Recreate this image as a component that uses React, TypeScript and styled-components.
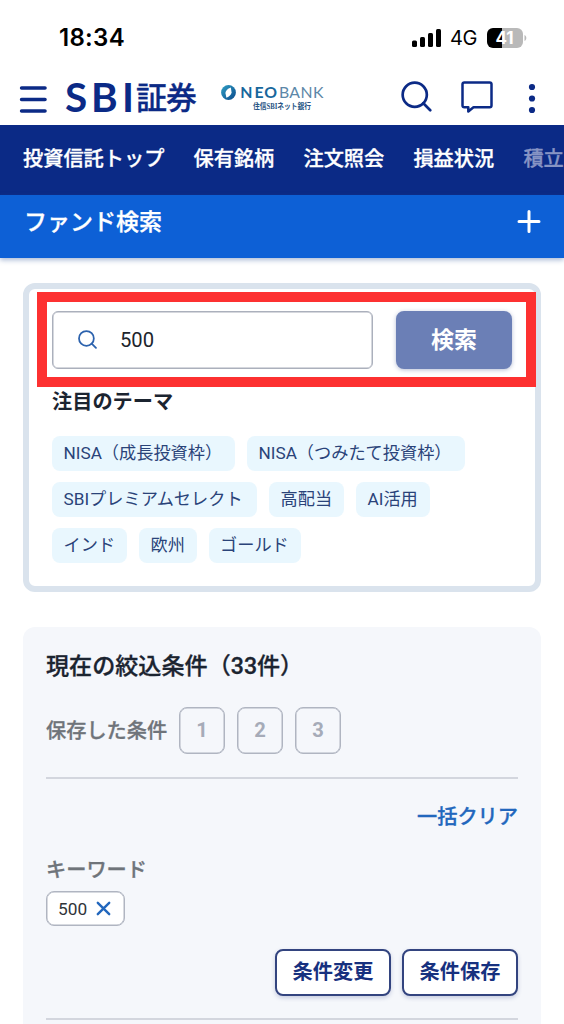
import React from 'react';
import styled, { createGlobalStyle, css } from 'styled-components';

const NAVY = '#0b2a86';

const semibold = css`
  font-weight: 500;
  -webkit-text-stroke: 0.3px currentColor;
`;

const GlobalStyle = createGlobalStyle`
  *, *::before, *::after { box-sizing: border-box; }
  html, body { margin: 0; padding: 0; }
  body {
    background: #fff;
    height: 1024px;
    overflow: hidden;
    font-family: Roboto, 'Noto Sans CJK JP', sans-serif;
    color: #1b2430;
  }
  button, input { font: inherit; margin: 0; }
  h1, h2, h3, p { margin: 0; font-weight: 700; }
`;

const Screen = styled.div`
  width: 564px;
  height: 1024px;
  overflow: hidden;
  display: flex;
  flex-direction: column;
  background: #fff;
`;

const StatusBar = styled.div`
  height: 72px;
  flex: none;
  display: flex;
  align-items: center;
  justify-content: space-between;
  padding: 3px 37px 0 59px;
  font-family: Inter, sans-serif;
  color: #000;
`;

const Clock = styled.span`
  font-size: 24px;
  font-weight: 600;
  letter-spacing: 0.3px;
`;

const StatusIcons = styled.div`
  display: flex;
  align-items: center;
`;

const Network = styled.span`
  font-size: 20px;
  font-weight: 400;
  margin: 1px 10px 0 9px;
  width: 27px;
  letter-spacing: -0.3px;
`;

const Header = styled.header`
  height: 53px;
  flex: none;
  display: flex;
  align-items: center;
  padding: 0 20px 0 19px;
  color: ${NAVY};
`;

const IconButton = styled.button<{ $gap?: number }>`
  display: flex;
  padding: 0;
  border: 0;
  background: none;
  color: inherit;
  margin-left: ${({ $gap = 0 }) => $gap}px;
`;

const Logo = styled.svg<{ $gap: number }>`
  display: block;
  flex: none;
  margin-left: ${({ $gap }) => $gap}px;
`;

const Actions = styled.div`
  display: flex;
  align-items: center;
  margin-left: auto;
  padding-bottom: 4px;
`;

const Nav = styled.nav`
  height: 70px;
  flex: none;
  display: flex;
  gap: 29.2px;
  padding: 20px 0 0 23px;
  overflow: hidden;
  white-space: nowrap;
  background: ${NAVY};
`;

const NavItem = styled.a<{ $faded?: boolean }>`
  font-size: 20.2px;
  line-height: 28px;
  ${semibold}
  color: ${({ $faded }) => ($faded ? '#8794c4' : '#fff')};
`;

const TitleBar = styled.div`
  height: 63px;
  flex: none;
  display: flex;
  align-items: flex-start;
  justify-content: space-between;
  padding: 12px 23px 0 24px;
  background: #0d60d6;
  color: #fff;
  box-shadow: 0 2px 5px rgba(40, 80, 150, 0.4);
`;

const PageTitle = styled.h1`
  font-size: 23px;
  line-height: 32px;
  ${semibold}
`;

const SearchCard = styled.section`
  height: 309px;
  flex: none;
  margin: 25px 23px 0;
  padding: 2.5px 0 0 8px;
  border: 6px solid #dae3ed;
  border-radius: 12px;
`;

const Highlight = styled.div`
  width: 498.5px;
  height: 95.5px;
  display: flex;
  align-items: center;
  justify-content: space-between;
  padding: 1px 13.5px 0 5px;
  border: 10px solid #fd3131;
  position: relative;
`;

const SearchField = styled.div`
  width: 321px;
  height: 58.5px;
  display: flex;
  align-items: center;
  padding-left: 25px;
  gap: 23px;
  border: 1.5px solid #abb0bc;
  box-shadow: inset 0 0 0 0.5px #abb0bc;
  border-radius: 6px;
  color: #2c62ad;
`;

const Query = styled.span`
  font-size: 20.2px;
  color: #20242b;
`;

const SearchButton = styled.button`
  width: 116px;
  height: 58.5px;
  padding: 0 0 4px;
  border: 0;
  border-radius: 8px;
  background: #6b7fb6;
  color: #fff;
  font-size: 23px;
  font-weight: 700;
  box-shadow: 0 1px 4px rgba(70, 90, 150, 0.4);
`;

const ThemeHeading = styled.h2`
  font-size: 20.2px;
  line-height: 28px;
  margin: 0.5px 0 20px 15px;
`;

const Themes = styled.div`
  display: flex;
  flex-direction: column;
  gap: 11.2px;
  padding-left: 15px;
`;

const ThemeRow = styled.div`
  display: flex;
  gap: 12px;
`;

const Theme = styled.a<{ $width: number }>`
  width: ${({ $width }) => $width}px;
  height: 35px;
  line-height: 34px;
  padding-left: 11.5px;
  border-radius: 8px;
  background: #e9f7fe;
  color: #2a4379;
  font-size: 17.2px;
  white-space: nowrap;
`;

const Panel = styled.section`
  height: 420px;
  flex: none;
  margin: 35px 23px 0;
  padding: 24px 23px 0;
  border-radius: 12px;
  background: #f5f7fb;
`;

const PanelTitle = styled.h2`
  font-size: 23.1px;
  line-height: 32px;
  ${semibold}
`;

const SavedRow = styled.div`
  display: flex;
  align-items: center;
  gap: 12px;
  margin-top: 24px;
`;

const Label = styled.span`
  display: block;
  font-size: 20.2px;
  line-height: 28px;
  ${semibold}
  color: #6f747a;
`;

const Slot = styled.button`
  width: 46px;
  height: 47px;
  padding: 0 0 2px;
  border: 1.5px solid #b0b5c1;
  box-shadow: inset 0 0 0 0.5px #b0b5c1;
  border-radius: 8px;
  background: transparent;
  color: #a6abb8;
  font-size: 20.2px;
  font-weight: 700;
`;

const Divider = styled.hr`
  height: 2px;
  margin: 22.5px 0 0;
  border: 0;
  background: #d3d6de;
`;

const ClearLink = styled.a`
  display: block;
  margin-top: 24px;
  text-align: right;
  font-size: 20.2px;
  line-height: 28px;
  ${semibold}
  color: #2267bd;
`;

const KeywordGroup = styled.div`
  margin-top: 25px;
`;

const KeywordTag = styled.div`
  width: 79px;
  height: 35px;
  display: flex;
  align-items: center;
  gap: 9px;
  margin-top: 7.5px;
  padding-left: 11px;
  border: 1.5px solid #b0b5c1;
  box-shadow: inset 0 0 0 0.5px #b0b5c1;
  border-radius: 8px;
  background: #fff;
  font-size: 17.3px;
  color: #303439;
`;

const ButtonRow = styled.div`
  display: flex;
  justify-content: flex-end;
  gap: 11px;
  margin-top: 23px;
`;

const OutlineButton = styled.button`
  width: 116px;
  height: 46.5px;
  padding: 0 0 4px;
  border: 2px solid #33447f;
  border-radius: 8px;
  background: #fff;
  color: #17317f;
  font-size: 20.2px;
  font-weight: 700;
  box-shadow: 0 2px 4px rgba(40, 60, 130, 0.22);
`;

const SignalIcon = () => (
  <svg width="29" height="18" viewBox="0 0 29 18">
    <rect x="0" y="11.5" width="5" height="6.5" rx="1.5" />
    <rect x="8" y="8" width="5" height="10" rx="1.5" />
    <rect x="16" y="4" width="5" height="14" rx="1.5" />
    <rect x="24" y="0" width="5" height="18" rx="1.5" />
  </svg>
);

const BatteryIcon = () => (
  <svg width="40" height="20" viewBox="0 0 40 20">
    <path d="M6 0H15V20H6a6 6 0 0 1-6-6V6a6 6 0 0 1 6-6Z" fill="#000" />
    <path d="M15 0H30a6 6 0 0 1 6 6v8a6 6 0 0 1-6 6H15Z" fill="#b9b9b9" />
    <path d="M37.5 7c2.4.8 2.4 5.2 0 6Z" fill="#b9b9b9" />
    <text x="17.5" y="16" textAnchor="middle" fontFamily="Inter, sans-serif" fontSize="17" fontWeight="700" fill="#fff">41</text>
  </svg>
);

const MenuIcon = () => (
  <svg width="29" height="30" viewBox="0 0 29 30" stroke="currentColor" strokeWidth="3.6" strokeLinecap="round">
    <path d="M2.6 4H26M2.6 15.5H26M2.6 27H26" />
  </svg>
);

const SearchIcon = ({ size, stroke }: { size: number; stroke: number }) => (
  <svg width={size} height={size} viewBox="0 0 30 30" fill="none" stroke="currentColor" strokeWidth={stroke} strokeLinecap="round">
    <circle cx="13.3" cy="13.3" r="11.7" />
    <path d="M21.6 21.6L28.3 28.3" />
  </svg>
);

const ChatIcon = () => (
  <svg width="32" height="32" viewBox="0 0 32 32" fill="none" stroke="currentColor" strokeWidth="2.5" strokeLinejoin="round">
    <path d="M3.3 1.5H28.7Q30.5 1.5 30.5 3.3V24.5Q30.5 26.3 28.7 26.3H12.5L7.3 30.5V26.3H3.3Q1.5 26.3 1.5 24.5V3.3Q1.5 1.5 3.3 1.5Z" />
  </svg>
);

const MoreIcon = () => (
  <svg width="24" height="34" viewBox="0 0 24 34" fill="currentColor">
    <circle cx="12" cy="7" r="3.1" />
    <circle cx="12" cy="18.5" r="3.1" />
    <circle cx="12" cy="30" r="3.1" />
  </svg>
);

const PlusIcon = () => (
  <svg width="24" height="28" viewBox="0 0 24 28" stroke="currentColor" strokeWidth="3" strokeLinecap="round">
    <path d="M2 14.5H22M12 4.5V24.5" />
  </svg>
);

const CloseIcon = () => (
  <svg width="15" height="15" viewBox="0 0 15 15" stroke="#2267bd" strokeWidth="2.4" strokeLinecap="round">
    <path d="M1.8 1.8L13.2 13.2M13.2 1.8L1.8 13.2" />
  </svg>
);

const SbiLogo = () => (
  <Logo $gap={17} width="138" height="52" viewBox="0 0 138 52" fill={NAVY}>
    <text x="0 26 57" y="38.5" fontFamily="Lato, sans-serif" fontWeight="700" fontSize="40.5">SBI</text>
    <text x="71 101" y="36" fontFamily="'Noto Sans CJK JP', sans-serif" fontWeight="500" fontSize="31" stroke={NAVY} strokeWidth="0.3">証券</text>
  </Logo>
);

const NeobankLogo = () => (
  <Logo $gap={17} width="106" height="34" viewBox="0 0 106 34">
    <defs>
      <linearGradient id="ring" x1="0" y1="0" x2="1" y2="1">
        <stop offset="0" stopColor="#2f9fc4" />
        <stop offset="1" stopColor="#0b4a8c" />
      </linearGradient>
    </defs>
    <circle cx="8.5" cy="10.5" r="7.4" fill="url(#ring)" />
    <path d="M10.8 5.5L11.6 10.5Q10.8 14 6.4 15.8L5.4 11Q6 7.4 10.8 5.500Z" fill="#fff" />
    <text x="20.2 34.5 44.2" y="16" fontFamily="Lato, sans-serif" fontWeight="700" fontSize="15.8" fill="#17679c">NEO</text>
    <text x="59 69.2 80.5 93" y="16" fontFamily="Lato, sans-serif" fontWeight="400" fontSize="15.8" fill="#5c87a8">BANK</text>
    <text x="33" y="26.500" textLength="58" lengthAdjust="spacingAndGlyphs" fontFamily="'Liberation Serif', 'Noto Sans CJK JP', serif" fontWeight="700" fontSize="8" fill="#285584">住信SBIネット銀行</text>
  </Logo>
);

const THEMES = [
  [{ name: 'NISA（成長投資枠）', width: 183 }, { name: 'NISA（つみたて投資枠）', width: 218 }],
  [{ name: 'SBIプレミアムセレクト', width: 205 }, { name: '高配当', width: 75 }, { name: 'AI活用', width: 73.5 }],
  [{ name: 'インド', width: 75 }, { name: '欧州', width: 57.5 }, { name: 'ゴールド', width: 92 }],
];

const NAV_ITEMS = ['投資信託トップ', '保有銘柄', '注文照会', '損益状況', '積立'];

export default function App() {
  return (
    <>
      <GlobalStyle />
      <Screen>
        <StatusBar>
          <Clock>18:34</Clock>
          <StatusIcons>
            <SignalIcon />
            <Network>4G</Network>
            <BatteryIcon />
          </StatusIcons>
        </StatusBar>
        <Header>
          <IconButton aria-label="メニュー"><MenuIcon /></IconButton>
          <SbiLogo />
          <NeobankLogo />
          <Actions>
            <IconButton aria-label="検索"><SearchIcon size={31} stroke={2.6} /></IconButton>
            <IconButton aria-label="メッセージ" $gap={29}><ChatIcon /></IconButton>
            <IconButton aria-label="その他" $gap={27}><MoreIcon /></IconButton>
          </Actions>
        </Header>
        <Nav>
          {NAV_ITEMS.map((item, i) => (
            <NavItem key={item} $faded={i === NAV_ITEMS.length - 1}>{item}</NavItem>
          ))}
        </Nav>
        <TitleBar>
          <PageTitle>ファンド検索</PageTitle>
          <IconButton aria-label="開く"><PlusIcon /></IconButton>
        </TitleBar>
        <SearchCard>
          <Highlight>
            <SearchField>
              <SearchIcon size={19} stroke={2.8} />
              <Query>500</Query>
            </SearchField>
            <SearchButton>検索</SearchButton>
          </Highlight>
          <ThemeHeading>注目のテーマ</ThemeHeading>
          <Themes>
            {THEMES.map((row, i) => (
              <ThemeRow key={i}>
                {row.map((t) => <Theme key={t.name} $width={t.width}>{t.name}</Theme>)}
              </ThemeRow>
            ))}
          </Themes>
        </SearchCard>
        <Panel>
          <PanelTitle>現在の絞込条件（33件）</PanelTitle>
          <SavedRow>
            <Label>保存した条件</Label>
            {[1, 2, 3].map((n) => <Slot key={n}>{n}</Slot>)}
          </SavedRow>
          <Divider />
          <ClearLink>一括クリア</ClearLink>
          <KeywordGroup>
            <Label>キーワード</Label>
            <KeywordTag>500<CloseIcon /></KeywordTag>
          </KeywordGroup>
          <ButtonRow>
            <OutlineButton>条件変更</OutlineButton>
            <OutlineButton>条件保存</OutlineButton>
          </ButtonRow>
          <Divider />
        </Panel>
      </Screen>
    </>
  );
}
